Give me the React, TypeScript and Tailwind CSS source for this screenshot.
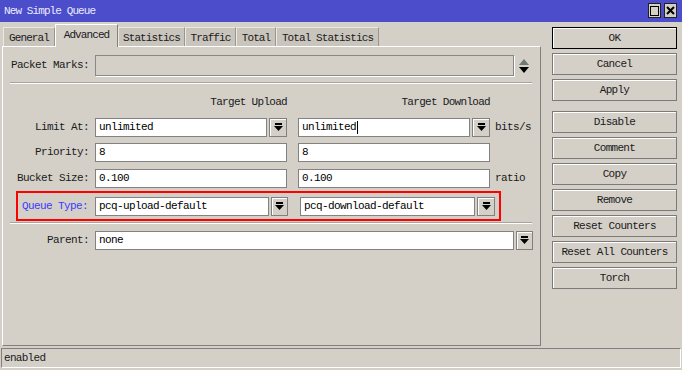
import React from "react";

const font = { fontFamily: '"Liberation Mono", "DejaVu Sans Mono", monospace' };

function DropIcon() {
  return (
    <svg width="9" height="9" viewBox="0 0 9 9">
      <rect x="1" y="0" width="7" height="2" fill="#000" />
      <polygon points="0,3 9,3 4.5,8" fill="#000" />
    </svg>
  );
}

function DropBtn({ w = "w-[18px]" }: { w?: string }) {
  return (
    <div
      className={`${w} h-[19px] ml-[2px] flex items-center justify-center bg-[#d4d0c8] border border-[#808080] shadow-[inset_1px_1px_0_#fff]`}
    >
      <DropIcon />
    </div>
  );
}

function Input({ w, value, cursor }: { w: string; value: string; cursor?: boolean }) {
  return (
    <div
      className={`${w} h-[19px] bg-white border border-[#828282] flex items-center pl-[3px] text-[11px] tracking-[-0.6px] text-black`}
    >
      <span>{value}</span>
      {cursor && <span className="w-px h-[13px] bg-black ml-[1px]" />}
    </div>
  );
}

function Label({ text, w = "w-[86px]", mr = "mr-[6px]", blue }: { text: string; w?: string; mr?: string; blue?: boolean }) {
  return (
    <div
      className={`${w} ${mr} text-right text-[11px] tracking-[-0.6px] ${blue ? "text-[#3a3aff]" : "text-[#1a1a1a]"}`}
    >
      {text}
    </div>
  );
}

function Sep() {
  return (
    <div className="ml-[7px] w-[522px]">
      <div className="h-px bg-[#a8a49c]" />
      <div className="h-px bg-white" />
    </div>
  );
}

function SideBtn({ text, def }: { text: string; def?: boolean }) {
  return (
    <div
      className={`w-[125px] h-[22px] flex items-center justify-center bg-[#d4d0c8] border ${def ? "border-black" : "border-[#7a7a7a]"} shadow-[inset_1px_1px_0_#fff] text-[11px] tracking-[-0.7px] text-[#1a1a1a]`}
    >
      {text}
    </div>
  );
}

const tabs = [
  { t: "General", w: "w-[52px]" },
  { t: "Advanced", w: "w-[63px]", active: true },
  { t: "Statistics", w: "w-[67px]" },
  { t: "Traffic", w: "w-[51px]" },
  { t: "Total", w: "w-[40px]" },
  { t: "Total Statistics", w: "w-[103px]" },
];

export default function App() {
  return (
    <div style={font} className="w-[682px] h-[370px] bg-[#d4d0c8] flex flex-col overflow-hidden">
      {/* Title bar */}
      <div className="h-[22px] bg-[#4b4dcb] flex items-center justify-between pl-[4px] pr-[5px]">
        <span className="text-[11px] tracking-[-0.9px] text-[#ececff]">New Simple Queue</span>
        <div className="flex gap-[3px] mt-[3px] self-start">
          <div className="w-[13px] h-[15px] bg-[#d4d0c8] border border-[#202020] flex items-center justify-center">
            <div className="w-[9px] h-[10px] border border-black" />
          </div>
          <div className="w-[13px] h-[15px] bg-[#d4d0c8] border border-[#202020] flex items-center justify-center">
            <svg width="9" height="9" viewBox="0 0 9 9">
              <path d="M1 1 L8 8 M8 1 L1 8" stroke="#000" strokeWidth="2" />
            </svg>
          </div>
        </div>
      </div>

      <div className="flex">
        {/* Left column */}
        <div className="ml-[2px] w-[539px] flex flex-col">
          <div className="h-[24px] flex items-end pl-[1px] relative z-10">
            {tabs.map((tab) =>
              tab.active ? (
                <div
                  key={tab.t}
                  className={`${tab.w} h-[23px] -mb-[1px] bg-[#d4d0c8] border-t border-l border-white border-r border-r-[#808080] flex items-start justify-center pt-[2px] text-[11px] tracking-[-0.9px] text-[#1a1a1a]`}
                >
                  {tab.t}
                </div>
              ) : (
                <div
                  key={tab.t}
                  className={`${tab.w} h-[19px] bg-[#c9c5bd] border-t border-l border-[#ebe9e4] border-r border-r-[#9a968e] flex items-center justify-center pt-[3px] text-[11px] tracking-[-0.9px] text-[#1a1a1a]`}
                >
                  {tab.t}
                </div>
              )
            )}
          </div>
          <div className="h-[300px] border-t border-l border-white border-r border-b border-r-[#808080] border-b-[#808080] flex flex-col">
            {/* Packet marks */}
            <div className="mt-[8px] flex items-center">
              <Label text="Packet Marks:" />
              <div className="w-[419px] h-[21px] bg-[#d4d0c8] border border-[#888] shadow-[1px_1px_0_#fff]" />
              <div className="ml-[4px] flex flex-col items-center">
                <svg width="12" height="16" viewBox="0 0 12 16">
                  <polygon points="6,1 11,7 1,7" fill="#6e7a6e" />
                  <polygon points="1,9 11,9 6,15" fill="#000" />
                </svg>
              </div>
            </div>
            <div className="mt-[6px]">
              <Sep />
            </div>

            {/* headers */}
            <div className="mt-[12px] h-[12px] flex items-center text-[11px] tracking-[-0.7px] text-[#1a1a1a]">
              <div className="ml-[92px] w-[192px] text-right">Target Upload</div>
              <div className="ml-[11px] w-[192px] text-right">Target Download</div>
            </div>

            {/* Limit at */}
            <div className="mt-[10px] flex items-center">
              <Label text="Limit At:" />
              <Input w="w-[172px]" value="unlimited" />
              <DropBtn />
              <div className="ml-[11px]">
                <Input w="w-[172px]" value="unlimited" cursor />
              </div>
              <DropBtn />
              <span className="ml-[5px] text-[11px] tracking-[-0.6px] text-[#1a1a1a]">bits/s</span>
            </div>

            {/* Priority */}
            <div className="mt-[6px] flex items-center">
              <Label text="Priority:" />
              <Input w="w-[192px]" value="8" />
              <div className="ml-[11px]">
                <Input w="w-[192px]" value="8" />
              </div>
            </div>

            {/* Bucket size */}
            <div className="mt-[7px] flex items-center">
              <Label text="Bucket Size:" />
              <Input w="w-[192px]" value="0.100" />
              <div className="ml-[11px]">
                <Input w="w-[192px]" value="0.100" />
              </div>
              <span className="ml-[5px] text-[11px] tracking-[-0.6px] text-[#1a1a1a]">ratio</span>
            </div>

            {/* Queue type (highlighted) */}
            <div className="mt-[3px] ml-[13px] w-[485px] h-[30px] border-2 border-[#ff0000] flex items-center">
              <Label text="Queue Type:" w="w-[70px]" mr="mr-[7px]" blue />
              <Input w="w-[174px]" value="pcq-upload-default" />
              <DropBtn w="w-[17px]" />
              <div className="ml-[12px]">
                <Input w="w-[175px]" value="pcq-download-default" />
              </div>
              <DropBtn />
            </div>
            <div className="mt-[1px]">
              <Sep />
            </div>

            {/* Parent */}
            <div className="mt-[7px] flex items-center">
              <Label text="Parent:" />
              <Input w="w-[419px]" value="none" />
              <DropBtn w="w-[17px]" />
            </div>
          </div>
        </div>

        {/* Right column */}
        <div className="ml-[11px] pt-[5px] flex flex-col">
          <div className="flex flex-col gap-[4px]">
            <SideBtn text="OK" def />
            <SideBtn text="Cancel" />
            <SideBtn text="Apply" />
          </div>
          <div className="mt-[10px] flex flex-col gap-[4px]">
            <SideBtn text="Disable" />
            <SideBtn text="Comment" />
            <SideBtn text="Copy" />
            <SideBtn text="Remove" />
            <SideBtn text="Reset Counters" />
            <SideBtn text="Reset All Counters" />
            <SideBtn text="Torch" />
          </div>
        </div>
      </div>

      {/* Status bar */}
      <div className="mt-[2px] ml-[1px] w-[680px] h-[20px] border-t border-l border-[#808080] border-b border-r border-b-white border-r-white flex items-center pl-[2px] text-[11px] tracking-[-0.7px] text-[#1a1a1a]">
        enabled
      </div>
    </div>
  );
}
